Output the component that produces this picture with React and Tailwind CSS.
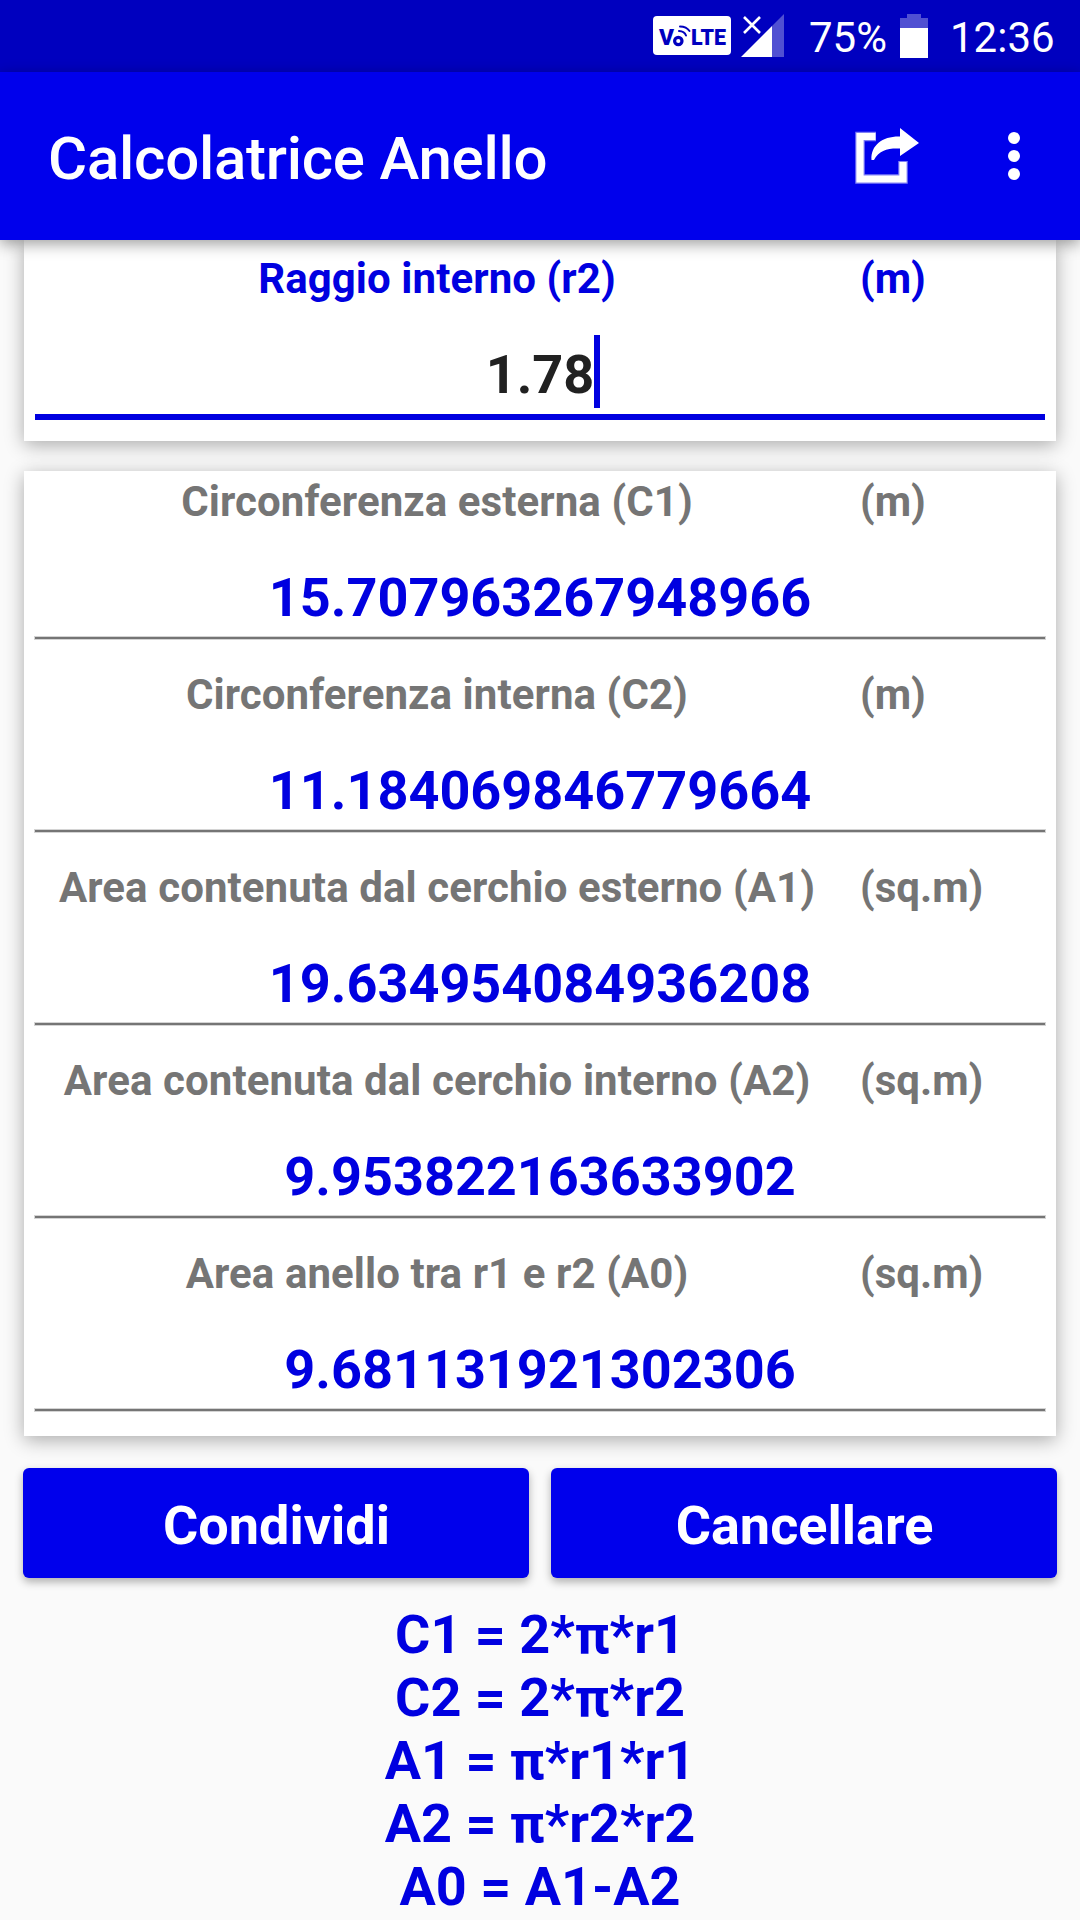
const results = [
  { label: 'Circonferenza esterna (C1)', unit: '(m)', value: '15.707963267948966' },
  { label: 'Circonferenza interna (C2)', unit: '(m)', value: '11.184069846779664' },
  { label: 'Area contenuta dal cerchio esterno (A1)', unit: '(sq.m)', value: '19.634954084936208' },
  { label: 'Area contenuta dal cerchio interno (A2)', unit: '(sq.m)', value: '9.953822163633902' },
  { label: 'Area anello tra r1 e r2 (A0)', unit: '(sq.m)', value: '9.681131921302306' },
];

const formulas = ['C1 = 2*π*r1', 'C2 = 2*π*r2', 'A1 = π*r1*r1', 'A2 = π*r2*r2', 'A0 = A1-A2'];

function VolteBadge() {
  return (
    <svg className="h-10 w-[78px]" viewBox="0 0 78 40">
      <rect width="78" height="39" y="0" rx="4" fill="#fff" />
      <g fill="#0000bf" fontFamily="Roboto, sans-serif" fontWeight="900" fontSize="22">
        <text x="6" y="28.7" textLength="15" lengthAdjust="spacingAndGlyphs">V</text>
        <text x="38" y="28.7" textLength="35" lengthAdjust="spacingAndGlyphs">LTE</text>
      </g>
      <g fill="none" stroke="#0000bf" strokeLinecap="round">
        <circle cx="25.3" cy="25" r="3.7" strokeWidth="3.2" />
        <path d="M26 15Q31.5 15.3 33 19.5" strokeWidth="2" />
        <path d="M27 10.4Q33.5 10.5 36.5 15" strokeWidth="2" />
      </g>
    </svg>
  );
}

function SignalIcon() {
  return (
    <svg className="h-11 w-[43px]" viewBox="0 0 43 44">
      <path d="M43 0V43H31V12Z" fill="#5050d2" />
      <path d="M31 12V43H0Z" fill="#fff" />
      <path d="M3 3L19 19M19 3L3 19" stroke="#fff" strokeWidth="2.6" />
    </svg>
  );
}

function BatteryIcon() {
  return (
    <svg className="h-11 w-7" viewBox="0 0 28 44">
      <path d="M7 0H21V4H28V15H0V4H7Z" fill="#5050d2" />
      <path d="M0 14H28V44H0Z" fill="#fff" />
    </svg>
  );
}

function ShareIcon() {
  return (
    <svg className="mt-1 h-[60px] w-[68px]" viewBox="0 0 68 60">
      <g opacity="0.5">
        <path d="M22 8.5H6V51H49V33" fill="none" stroke="#fff" strokeWidth="9.5" />
      </g>
      <path d="M21.5 8.5H6V51H49V34" fill="none" stroke="#fff" strokeWidth="7.2" />
      <path d="M46 0L65 15L46 28V20.5C34 20 25 22 20 32H17.5C16.5 17 29 8 46 8.5Z" fill="#fff" />
    </svg>
  );
}

function DotsIcon() {
  return (
    <svg className="h-12 w-3" viewBox="0 0 12 48" fill="#fff">
      <circle cx="6" cy="6" r="6" />
      <circle cx="6" cy="24" r="6" />
      <circle cx="6" cy="42" r="6" />
    </svg>
  );
}

function Label({ text, unit, color }) {
  return (
    <div className={`flex h-[61px] text-[42px] leading-[61px] font-bold whitespace-nowrap ${color}`}>
      <div className="w-[826px] text-center tracking-[0.08px]">{text}</div>
      <div className="pl-[10px]">{unit}</div>
    </div>
  );
}

function Result({ label, unit, value }) {
  return (
    <div className="flex h-[193px] flex-col">
      <Label text={label} unit={unit} color="text-[#757575]" />
      <div className="mt-[26px] h-[79px] text-center text-[54px] leading-[79px] font-bold text-[#0000e0]">{value}</div>
      <div className="mx-[11px] h-[2px] bg-[#757575] shadow-[0_0_0_1px_#d4d4d4]" />
    </div>
  );
}

function Button({ children }) {
  return (
    <button className="h-[110px] flex-1 rounded-[6px] bg-[#0000ec] pt-[6px] pl-[1px] text-[54px] leading-[104px] font-bold text-white shadow-[0_4px_8px_rgba(0,0,0,0.3)]">
      {children}
    </button>
  );
}

export default function App() {
  return (
    <div className="flex h-[1920px] w-[1080px] flex-col overflow-hidden bg-[#fafafa] font-['Roboto',sans-serif]">
      <div className="flex h-[72px] shrink-0 items-center bg-[#0000bf] pl-[653px] text-[42px] text-white">
        <VolteBadge />
        <div className="ml-[10px]"><SignalIcon /></div>
        <div className="ml-[25px] w-[91px] pt-[3px] leading-[72px]">75%</div>
        <BatteryIcon />
        <div className="ml-[22px] pt-[3px] leading-[72px]">12:36</div>
      </div>
      <header className="relative z-10 flex h-[168px] shrink-0 items-center bg-[#0000ec] pl-12 shadow-[0_4px_14px_rgba(0,0,0,0.38)]">
        <h1 className="w-[806px] pt-[6px] text-[60px] leading-[60px] font-medium tracking-[-0.25px] text-white">Calcolatrice Anello</h1>
        <ShareIcon />
        <div className="ml-[86px]"><DotsIcon /></div>
      </header>
      <main className="flex flex-col px-6">
        <section className="h-[201px] bg-white pt-2 shadow-[0_4px_18px_rgba(0,0,0,0.32)]">
          <Label text="Raggio interno (r2)" unit="(m)" color="text-[#0000e0]" />
          <div className="mt-[26px] flex h-[79px] justify-center text-[54px] leading-[79px] font-bold text-[#212121]">
            <span>1.78</span>
            <span className="-mr-[6px] h-[73px] w-[6px] bg-[#0000e0]" />
          </div>
          <div className="mx-[11px] h-[6px] bg-[#0000e0]" />
        </section>
        <section className="mt-[30px] bg-white shadow-[0_4px_18px_rgba(0,0,0,0.32)]">
          {results.map((r) => <Result key={r.label} {...r} />)}
        </section>
        <div className="-mx-px mt-8 flex gap-[22px]">
          <Button>Condividi</Button>
          <Button>Cancellare</Button>
        </div>
        <div className="mt-[25px] text-center text-[54px] leading-[63px] font-bold text-[#0000e0]">
          {formulas.map((f) => <p key={f}>{f}</p>)}
        </div>
      </main>
    </div>
  );
}
